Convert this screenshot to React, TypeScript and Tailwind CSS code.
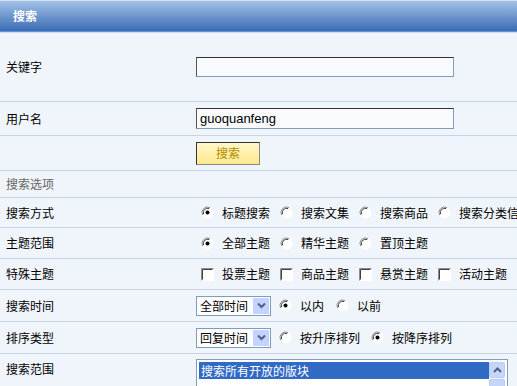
import React from "react";

const font = { fontFamily: '"Noto Sans CJK SC", "Liberation Sans", sans-serif' };

function Radio({ checked }: { checked?: boolean }) {
  return (
    <svg width="13" height="13" viewBox="0 0 13 13" className="shrink-0">
      <circle cx="6.5" cy="6.5" r="5.5" fill="#ffffff" />
      <path d="M1.6 9 A5.5 5.5 0 0 1 9 1.6" fill="none" stroke="#8c8c8c" strokeWidth="1" />
      <path d="M2.6 8.2 A4.3 4.3 0 0 1 8.2 2.6" fill="none" stroke="#404040" strokeWidth="1" />
      <path d="M11.4 4 A5.5 5.5 0 0 1 4 11.4" fill="none" stroke="#ffffff" strokeWidth="1" />
      {checked && <circle cx="6.5" cy="6.5" r="2" fill="#000" />}
    </svg>
  );
}

function Check() {
  return (
    <svg width="13" height="13" viewBox="0 0 13 13" className="shrink-0">
      <rect x="0" y="0" width="13" height="13" fill="#ffffff" />
      <path d="M0.5 12.5 V0.5 H12.5" fill="none" stroke="#8c8c8c" />
      <path d="M1.5 11.5 V1.5 H11.5" fill="none" stroke="#404040" />
    </svg>
  );
}

function Opt({ label, checked, box }: { label: string; checked?: boolean; box?: boolean }) {
  return (
    <div className="flex items-center">
      {box ? <Check /> : <Radio checked={checked} />}
      <span className="ml-[8px] text-[12px] text-black leading-none">{label}</span>
    </div>
  );
}

function Select({ value }: { value: string }) {
  return (
    <div className="flex h-[20px] w-[75px] items-center border border-[#7f9db9] bg-white">
      <span className="flex-1 pl-[3px] text-[12px] leading-none text-black">{value}</span>
      <div className="mr-[1px] flex h-[16px] w-[16px] items-center justify-center bg-[#c3d3fd]">
        <svg width="9" height="7" viewBox="0 0 9 7">
          <path d="M1 1.5 L4.5 5 L8 1.5" fill="none" stroke="#4d6185" strokeWidth="2" />
        </svg>
      </div>
    </div>
  );
}

function Row({ label, h, children, grey }: { label: string; h: string; children?: React.ReactNode; grey?: boolean }) {
  return (
    <div className={`flex items-center border-b border-[#c5d4e6] ${h}`}>
      <div className={`w-[196px] shrink-0 pl-[6px] text-[12px] leading-none ${grey ? "text-[#666666]" : "text-black"}`}>
        {label}
      </div>
      <div className="flex flex-1 items-center">{children}</div>
    </div>
  );
}

export default function App() {
  return (
    <div className="h-[386px] w-[517px] overflow-hidden bg-[#f0f5fb]" style={font}>
      <div className="h-[31px] border-t border-[#d5e3f3] bg-gradient-to-b from-[#a3c1e7] to-[#3c6cb3] pl-[13px] flex items-center">
        <span className="text-[12px] font-bold text-white leading-none">搜索</span>
      </div>
      <div className="h-[1px] bg-[#5b93e0]" />
      <div className="h-[1px] bg-[#c9dcf3]" />

      <Row label="关键字" h="h-[69px]">
        <div className="h-[20px] w-[258px] border border-[#7f9db9] border-t-[#333] border-l-[#555] bg-[#f8fafd]" />
      </Row>
      <Row label="用户名" h="h-[34px]">
        <div className="flex h-[21px] w-[258px] items-center border border-[#7f9db9] border-t-[#333] border-l-[#555] bg-[#f8fafd] pl-[3px]">
          <span className="text-[13px] leading-none text-black" style={{ fontFamily: '"Liberation Sans", sans-serif' }}>
            guoquanfeng
          </span>
        </div>
      </Row>
      <Row label="" h="h-[35px]">
        <div className="flex h-[23px] w-[64px] items-center justify-center border border-[#333] border-r-[#888] border-b-[#888] bg-gradient-to-b from-[#fff8c8] to-[#ffe98e]">
          <span className="text-[12px] leading-none text-[#b38a00]">搜索</span>
        </div>
      </Row>
      <Row label="搜索选项" h="h-[27px]" grey />
      <Row label="搜索方式" h="h-[30px]">
        <div className="flex items-center gap-[10px] pl-[5px] whitespace-nowrap">
          <Opt label="标题搜索" checked />
          <Opt label="搜索文集" />
          <Opt label="搜索商品" />
          <Opt label="搜索分类信息" />
        </div>
      </Row>
      <Row label="主题范围" h="h-[31px]">
        <div className="flex items-center gap-[10px] pl-[5px]">
          <Opt label="全部主题" checked />
          <Opt label="精华主题" />
          <Opt label="置顶主题" />
        </div>
      </Row>
      <Row label="特殊主题" h="h-[31px]">
        <div className="flex items-center gap-[10px] pl-[5px]">
          <Opt box label="投票主题" />
          <Opt box label="商品主题" />
          <Opt box label="悬赏主题" />
          <Opt box label="活动主题" />
        </div>
      </Row>
      <Row label="搜索时间" h="h-[32px]">
        <Select value="全部时间" />
        <div className="ml-[8px] flex items-center gap-[12px]">
          <Opt label="以内" checked />
          <Opt label="以前" />
        </div>
      </Row>
      <Row label="排序类型" h="h-[32px]">
        <Select value="回复时间" />
        <div className="ml-[8px] flex items-center gap-[11px]">
          <Opt label="按升序排列" />
          <Opt label="按降序排列" checked />
        </div>
      </Row>
      <div className="flex items-start">
        <div className="w-[196px] shrink-0 pl-[6px] pt-[9px] text-[12px] leading-none text-black">搜索范围</div>
        <div className="mt-[5px] flex h-[100px] w-[312px] border border-[#7f9db9] bg-white p-[2px]">
          <div className="flex-1">
            <div className="flex h-[17px] items-center bg-[#316ac5] pl-[2px]">
              <span className="text-[12px] leading-none text-white">搜索所有开放的版块</span>
            </div>
          </div>
          <div className="flex w-[16px] flex-col bg-[#f4f7fd]">
            <div className="flex h-[16px] items-center justify-center rounded-[2px] border border-[#b9cdf5] bg-[#c6d6fb]">
              <svg width="9" height="7" viewBox="0 0 9 7">
                <path d="M1 5 L4.5 1.5 L8 5" fill="none" stroke="#4d6185" strokeWidth="2" />
              </svg>
            </div>
            <div className="mt-[1px] h-[40px] rounded-[2px] border border-[#b9cdf5] bg-[#c6d6fb]" />
          </div>
        </div>
      </div>
    </div>
  );
}
